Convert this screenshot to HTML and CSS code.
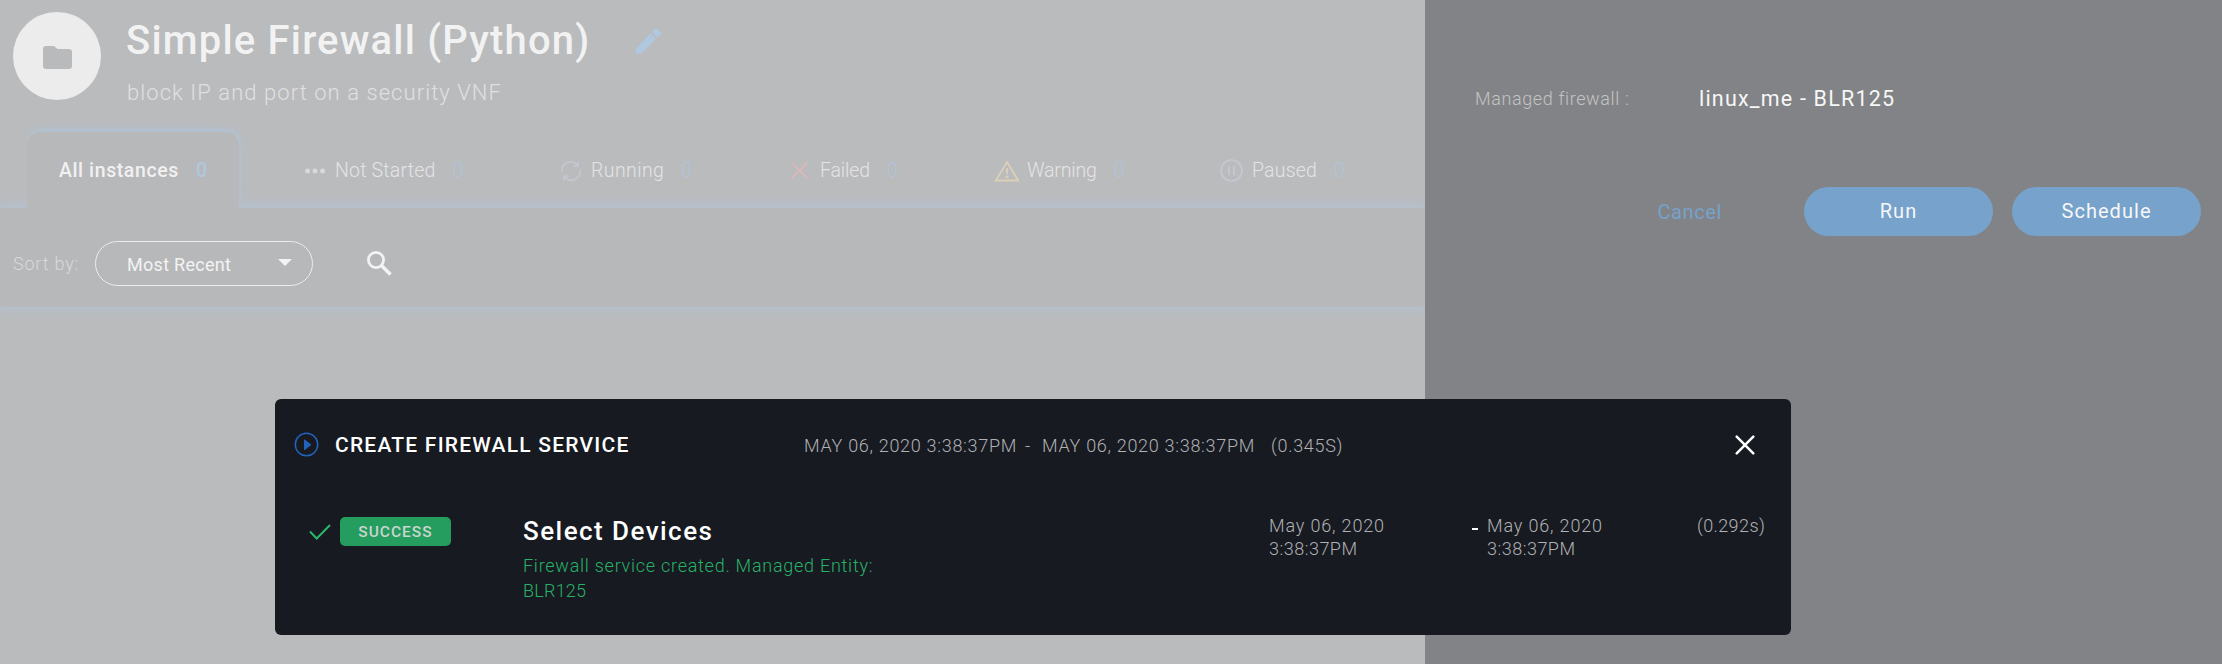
FILE: index.html
```html
<!DOCTYPE html>
<html lang="en">
<head>
<meta charset="utf-8">
<title>Simple Firewall (Python)</title>
<link rel="stylesheet" href="styles.css">
</head>
<body>
<div class="app">
  <main class="workflow">
    <header class="header">
      <div class="avatar">
        <svg width="29" height="23" viewBox="0 0 29 23"><path d="M3 0h8l3.500 3H26a3 3 0 0 1 3 3v14a3 3 0 0 1-3 3H3a3 3 0 0 1-3-3V3a3 3 0 0 1 3-3z" fill="#b9babc"/></svg>
      </div>
      <div class="heading">
        <h1 class="title">Simple Firewall (Python)</h1>
        <p class="subtitle">block IP and port on a security VNF</p>
      </div>
      <svg class="edit" width="26" height="26" viewBox="0 0 26 26" fill="#b0c8df"><path d="M0 20.500 14.500 5.500l5.500 5.500L5.500 25.500H0z"/><path d="m16 4 3-3.200q1-.9 2 0l3.800 3.700q.8 1 0 2L21.500 9.500z"/></svg>
    </header>
    <nav class="tabs">
      <div class="tab active"><span class="label">All instances</span><span class="count">0</span></div>
      <div class="tab not-started">
        <svg class="icon" width="20" height="6" viewBox="0 0 20 6" fill="#d8d9db"><circle cx="2.500" cy="3" r="2.500"/><circle cx="10" cy="3" r="2.500"/><circle cx="17.500" cy="3" r="2.500"/></svg>
        <span class="label">Not Started</span><span class="count">0</span>
      </div>
      <div class="tab running">
        <svg class="icon" width="20" height="20" viewBox="0 0 20 20" fill="none" stroke="#c4c7d1" stroke-width="1.700"><path d="M1 10.500A8.700 8.700 0 0 1 16.500 4.200M17 .5v4.300h-4.500M19 9.500A8.700 8.700 0 0 1 3.500 15.800M3 19.500v-4.300h4.500"/></svg>
        <span class="label">Running</span><span class="count">0</span>
      </div>
      <div class="tab failed">
        <svg class="icon" width="17" height="17" viewBox="0 0 17 17" stroke="#dcb8b6" stroke-width="1.800"><path d="M.7.700l15.600 15.600M16.300.7.700 16.300"/></svg>
        <span class="label">Failed</span><span class="count">0</span>
      </div>
      <div class="tab warning">
        <svg class="icon" width="26" height="22" viewBox="0 0 26 22" fill="none" stroke="#dccfb8" stroke-width="1.900"><path d="M13 2 24.200 20.500H1.800z"/><path d="M13 8v6"/><circle cx="13" cy="16.700" r=".6"/></svg>
        <span class="label">Warning</span><span class="count">0</span>
      </div>
      <div class="tab paused">
        <svg class="icon" width="23" height="23" viewBox="0 0 23 23" fill="none" stroke="#c5c8d3" stroke-width="1.700"><circle cx="11.500" cy="11.500" r="10.500"/><path d="M9 7v9M14 7v9"/></svg>
        <span class="label">Paused</span><span class="count">0</span>
      </div>
    </nav>
    <section class="toolbar">
      <span class="sort-label">Sort by:</span>
      <div class="select"><span>Most Recent</span><svg width="14" height="7" viewBox="0 0 14 7"><path d="M0 0h14L7 7z" fill="#f3f3f3"/></svg></div>
      <svg class="search" width="25" height="25" viewBox="0 0 25 25" fill="none" stroke="#f3f3f3"><circle cx="9" cy="9" r="7.600" stroke-width="2.800"/><path d="m14.500 14.500 9 9" stroke-width="3.500"/></svg>
    </section>
  </main>
  <aside class="panel">
    <div class="field"><span class="field-label">Managed firewall :</span><span class="field-value">linux_me - BLR125</span></div>
    <div class="actions">
      <span class="cancel">Cancel</span>
      <span class="button run">Run</span>
      <span class="button schedule">Schedule</span>
    </div>
  </aside>
</div>
<section class="dialog">
  <div class="dialog-head">
    <svg width="25" height="25" viewBox="0 0 25 25"><circle cx="12.500" cy="12.500" r="11.200" fill="none" stroke="#2263bb" stroke-width="1.500"/><path d="M10 8v9.500q0 .8.800.4l6-4.700q.5-.4 0-.9l-6-4.700Q10 7.200 10 8z" fill="#2263bb"/></svg>
    <h2 class="dialog-title">CREATE FIREWALL SERVICE</h2>
    <div class="range"><span>MAY 06, 2020 3:38:37PM</span><span class="hyphen">-</span><span>MAY 06, 2020 3:38:37PM</span><span class="duration">(0.345S)</span></div>
    <svg class="close" width="20" height="20" viewBox="0 0 20 20" stroke="#fff" stroke-width="2.500" stroke-linecap="round"><path d="m1.700 1.700 16.600 16.600M18.300 1.700 1.700 18.300"/></svg>
  </div>
  <div class="task">
    <svg class="check" width="22" height="16" viewBox="0 0 22 16" fill="none" stroke="#28b86a" stroke-width="2"><path d="m1 7.500 6.700 7L21 1"/></svg>
    <span class="badge">SUCCESS</span>
    <div class="task-body">
      <h3 class="task-title">Select Devices</h3>
      <p class="message">Firewall service created. Managed Entity: <span class="entity">BLR125</span></p>
    </div>
    <div class="time start">May 06, 2020 <span class="clock">3:38:37PM</span></div>
    <span class="separator"></span>
    <div class="time end">May 06, 2020 <span class="clock">3:38:37PM</span></div>
    <div class="time elapsed">(0.292s)</div>
  </div>
</section>
</body>
</html>
```
FILE: styles.css
```css
* { box-sizing: border-box; }
body { margin: 0; font-family: Roboto, sans-serif; overflow: hidden; }
h1, h2, h3, p { margin: 0; }
svg { display: block; flex: none; }
span { white-space: nowrap; }

.app { display: flex; width: 2222px; height: 664px; }
.workflow { width: 1425px; background: #babbbd; overflow: hidden; }

.header { display: flex; align-items: flex-start; height: 132px; padding-left: 13px; }
.avatar { display: flex; align-items: center; justify-content: center; flex: none; width: 88px; height: 88px; margin-top: 12px; border-radius: 50%; background: #ececec; padding: 2px 0 0 1px; }
.heading { width: 535px; padding: 17px 0 0 25px; }
.title { font-size: 40px; font-weight: 500; line-height: 48px; letter-spacing: 1.18px; color: #f2f2f2; white-space: nowrap; }
.subtitle { padding: 12px 0 0 1px; font-size: 22px; font-weight: 300; line-height: 31px; letter-spacing: 1.06px; color: #e0e0e1; }
.edit { margin-top: 28px; }

.tabs { display: grid; grid-template-columns: 212px 66px 256px 230px 203px 226px 200px; height: 76px; padding-left: 27px; }
.tab { display: flex; align-items: center; grid-row: 1; padding-top: 1px; font-size: 19.5px; font-weight: 300; line-height: 26px; color: #e4e4e5; }
.icon { margin-right: 9px; }
.count { margin-left: 17px; color: #aec5dc; }
.active { position: relative; z-index: 2; grid-column: 1; padding-left: 32px; border-radius: 14px 14px 0 0; background: #b7b8ba; box-shadow: 1px -3px 6px #b0c3d6; clip-path: inset(-16px -16px 0 0); font-weight: 500; letter-spacing: .6px; color: #f1f1f1; }
.active .count { margin-left: 17px; color: #b0c8df; }
.not-started { grid-column: 3; letter-spacing: .2px; }
.not-started .icon { margin-right: 10px; }
.running { grid-column: 4; letter-spacing: .4px; }
.running .icon { margin-right: 10px; }
.failed { grid-column: 5; letter-spacing: -.15px; }
.failed .icon { margin-right: 12px; }
.warning { grid-column: 6; letter-spacing: -.15px; }
.warning .icon { margin-right: 7px; }
.paused { grid-column: 7; letter-spacing: .2px; }
.paused .icon { margin-right: 9px; }

.toolbar { position: relative; display: flex; align-items: center; height: 99px; padding: 12px 0 0 13px; background: #b7b8ba; box-shadow: 0 -3px 12px #b4c2d0, 0 2px 10px #b3c1cf; }
.sort-label { width: 82px; font-size: 18px; font-weight: 300; letter-spacing: .8px; color: #d9d9da; }
.select { display: flex; align-items: center; justify-content: space-between; width: 218px; height: 45px; padding: 2px 20px 0 31px; border: 1.5px solid #ececed; border-radius: 22.5px; font-size: 18px; letter-spacing: .29px; color: #f3f3f3; }
.select svg { margin-top: -4px; }
.search { margin-left: 54px; }

.panel { width: 797px; padding: 81px 21px 0 50px; background: #828386; }
.field { display: flex; align-items: center; height: 34px; }
.field-label { width: 224px; font-size: 18px; font-weight: 300; letter-spacing: .62px; color: #c3c4c5; }
.field-value { font-size: 21.5px; letter-spacing: 1.2px; color: #f7f7f7; }
.actions { display: flex; justify-content: flex-end; align-items: center; margin-top: 72px; font-size: 20px; }
.cancel { margin-right: 82px; letter-spacing: .62px; color: #76a2cb; }
.button { width: 189px; height: 49px; border-radius: 24.5px; background: #76a2cb; line-height: 49px; text-align: center; letter-spacing: 1.04px; color: #f7f7f7; }
.schedule { margin-left: 19px; }

.dialog { position: absolute; left: 275px; top: 399px; width: 1516px; height: 236px; border-radius: 6px; background: #171a21; }
.dialog-head { display: flex; align-items: center; height: 91px; padding: 0 36px 0 19px; }
.dialog-title { width: 469px; margin-left: 16px; font-size: 21px; font-weight: 500; letter-spacing: 1.22px; color: #fff; white-space: nowrap; }
.range { display: flex; padding-top: 1px; font-size: 18px; font-weight: 300; letter-spacing: .7px; color: #b0b1b3; }
.hyphen { width: 25px; padding-left: 8px; }
.duration { margin-left: 16px; }
.close { margin-left: auto; }
.task { display: flex; align-items: flex-start; padding-left: 34px; }
.task > * { flex: none; }
.check { margin-top: 34px; }
.badge { width: 111px; height: 29px; margin: 27px 0 0 9px; border-radius: 5px; background: #249d5f; font-size: 15.5px; font-weight: 500; line-height: 30px; text-align: center; letter-spacing: 1px; color: #cbd5cf; }
.task-body { width: 818px; padding: 25px 0 0 72px; }
.task-title { font-size: 26px; font-weight: 500; line-height: 32px; letter-spacing: 1.45px; color: #fff; white-space: nowrap; }
.message { width: 380px; padding-top: 6px; font-size: 18px; font-weight: 300; line-height: 25px; letter-spacing: .74px; color: #28b268; }
.entity { letter-spacing: .22px; }
.time { width: 203px; padding: 24px 80px 0 0; font-size: 18px; font-weight: 300; line-height: 23px; letter-spacing: .84px; color: #b0b1b3; }
.clock { letter-spacing: .48px; }
.separator { width: 6px; height: 2px; margin-top: 38px; background: #fff; }
.end { margin-left: 9px; width: 210px; }
.elapsed { width: 80px; padding-right: 0; letter-spacing: .4px; }
```
